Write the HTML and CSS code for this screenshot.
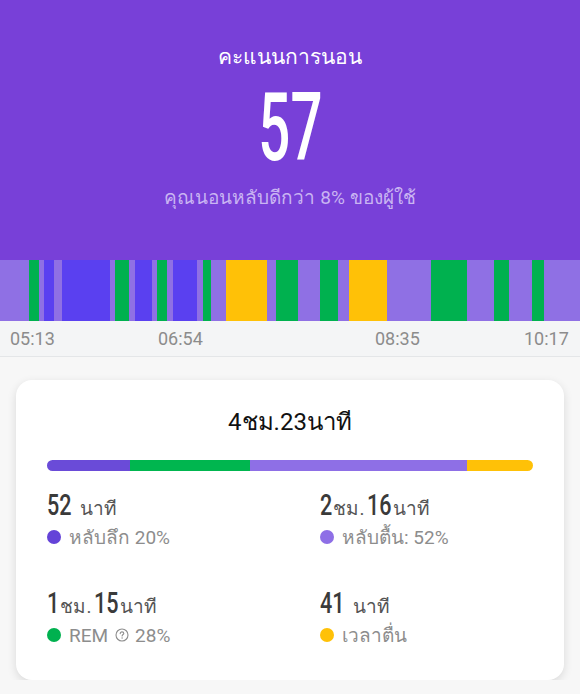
FILE: index.html
```html
<!DOCTYPE html>
<html lang="th">
<head>
    <meta charset="UTF-8">
    <meta name="viewport" content="width=device-width, initial-scale=1.0">
    <title>คะแนนการนอน</title>
    <link rel="stylesheet" href="styles.css">
</head>
<body>
    <div class="score-header">
        <h1 class="score-title">คะแนนการนอน</h1>
        <div class="score-value"><span>57</span></div>
        <p class="score-note">คุณนอนหลับดีกว่า 8% ของผู้ใช้</p>
    </div>

    <div class="stage-strip">
        <div class="stage light" style="flex: 29"></div>
        <div class="stage rem" style="flex: 10"></div>
        <div class="stage light" style="flex: 5"></div>
        <div class="stage deep" style="flex: 10"></div>
        <div class="stage light" style="flex: 8"></div>
        <div class="stage deep" style="flex: 48"></div>
        <div class="stage light" style="flex: 5"></div>
        <div class="stage rem" style="flex: 14"></div>
        <div class="stage light" style="flex: 6"></div>
        <div class="stage deep" style="flex: 17"></div>
        <div class="stage light" style="flex: 5"></div>
        <div class="stage rem" style="flex: 10"></div>
        <div class="stage light" style="flex: 6"></div>
        <div class="stage deep" style="flex: 24"></div>
        <div class="stage light" style="flex: 6"></div>
        <div class="stage rem" style="flex: 8"></div>
        <div class="stage light" style="flex: 15"></div>
        <div class="stage awake" style="flex: 41"></div>
        <div class="stage light" style="flex: 9"></div>
        <div class="stage rem" style="flex: 22"></div>
        <div class="stage light" style="flex: 22"></div>
        <div class="stage rem" style="flex: 18"></div>
        <div class="stage light" style="flex: 11"></div>
        <div class="stage awake" style="flex: 38"></div>
        <div class="stage light" style="flex: 44"></div>
        <div class="stage rem" style="flex: 36"></div>
        <div class="stage light" style="flex: 27"></div>
        <div class="stage rem" style="flex: 15"></div>
        <div class="stage light" style="flex: 23"></div>
        <div class="stage rem" style="flex: 12"></div>
        <div class="stage light" style="flex: 36"></div>
    </div>

    <div class="time-axis">
        <span class="time-label" style="left: 10px">05:13</span>
        <span class="time-label" style="left: 158px">06:54</span>
        <span class="time-label" style="left: 375px">08:35</span>
        <span class="time-label" style="left: 524px">10:17</span>
    </div>

    <div class="summary-card">
        <h2 class="summary-total">4ชม.23นาที</h2>

        <div class="ratio-bar">
            <div class="ratio deep" style="width: 83px"></div>
            <div class="ratio rem" style="width: 120px"></div>
            <div class="ratio light" style="width: 217px"></div>
            <div class="ratio awake" style="flex: 1"></div>
        </div>

        <div class="stats-grid">
            <div class="stat">
                <div class="stat-value"><span class="num d2">52</span> <span class="unit">นาที</span></div>
                <div class="stat-label"><span class="dot deep"></span>หลับลึก 20%</div>
            </div>
            <div class="stat">
                <div class="stat-value"><span class="num d1">2</span><span class="unit">ชม.</span><span class="num d2">16</span><span class="unit">นาที</span></div>
                <div class="stat-label"><span class="dot light"></span>หลับตื้น: 52%</div>
            </div>
            <div class="stat">
                <div class="stat-value"><span class="num d1">1</span><span class="unit">ชม.</span><span class="num d2">15</span><span class="unit">นาที</span></div>
                <div class="stat-label">
                    <span class="dot rem"></span>REM
                    <svg class="help-icon" viewBox="0 0 14 14" width="14" height="14">
                        <circle cx="7" cy="7" r="6" fill="none" stroke="#8d8d8d" stroke-width="1.1"/>
                        <path d="M5.2 5.6 C5.2 4.5 6 3.9 7 3.9 C8 3.9 8.8 4.5 8.8 5.4 C8.8 6.5 7.1 6.6 7.1 8" fill="none" stroke="#8d8d8d" stroke-width="1.1" stroke-linecap="round"/>
                        <circle cx="7.1" cy="10" r="0.7" fill="#8d8d8d"/>
                    </svg>
                    28%
                </div>
            </div>
            <div class="stat">
                <div class="stat-value"><span class="num d2">41</span> <span class="unit">นาที</span></div>
                <div class="stat-label"><span class="dot awake"></span>เวลาตื่น</div>
            </div>
        </div>
    </div>
</body>
</html>
```

FILE: styles.css
```css
* {
    box-sizing: border-box;
    margin: 0;
    padding: 0;
    font-family: Roboto, 'Noto Sans', sans-serif;
}

body {
    background-color: #f7f7f7;
    color: #333;
    width: 580px;
}

.score-header {
    height: 260px;
    background-color: #7840d8;
    color: white;
    text-align: center;
    padding-top: 43px;
}

.score-title {
    font-size: 21px;
    font-weight: 400;
    line-height: 28px;
}

.score-value {
    margin-top: 10px;
    height: 94px;
    font-size: 94px;
    font-weight: 500;
    line-height: 94px;
}

.score-value span {
    display: inline-block;
    transform: scaleX(0.6);
}

.score-note {
    margin-top: 11px;
    font-size: 19px;
    line-height: 24px;
    color: #c9b4f2;
}

.stage-strip {
    display: flex;
    height: 61px;
}

.stage.light { background-color: #8f70e4; }
.stage.deep { background-color: #5a40f0; }
.stage.rem { background-color: #00b14f; }
.stage.awake { background-color: #ffc107; }

.time-axis {
    position: relative;
    height: 36px;
    background-color: #f4f5f6;
    border-bottom: 1px solid #e4e6e8;
}

.time-label {
    position: absolute;
    top: 0;
    font-size: 18px;
    line-height: 35px;
    color: #8c8c8c;
}

.summary-card {
    margin: 23px 16px 0;
    padding: 27px 31px 33px;
    background-color: white;
    border-radius: 16px;
    box-shadow: 0 3px 10px rgba(0, 0, 0, 0.12);
}

.summary-total {
    font-size: 24px;
    font-weight: 400;
    line-height: 30px;
    text-align: center;
    color: #111;
}

.ratio-bar {
    display: flex;
    height: 11px;
    margin-top: 23px;
    border-radius: 6px;
    overflow: hidden;
}

.ratio.deep { background-color: #6a4bd8; }
.ratio.rem { background-color: #00b64f; }
.ratio.light { background-color: #8e6fe6; }
.ratio.awake { background-color: #ffc107; }

.stats-grid {
    display: grid;
    grid-template-columns: 273px auto;
    row-gap: 37px;
    margin-top: 17px;
}

.stat-value {
    height: 34px;
    font-size: 30px;
    font-weight: 500;
    line-height: 34px;
    color: #3a3a3a;
    white-space: nowrap;
}

.num {
    display: inline-block;
    transform: scaleX(0.72);
    transform-origin: left bottom;
}

.num.d1 { margin-right: -0.12em; }
.num.d2 { margin-right: -0.28em; }

.unit {
    font-size: 19px;
    font-weight: 400;
    color: #555;
    margin-right: 3px;
}

.stat-label {
    display: flex;
    align-items: center;
    margin-top: 3px;
    height: 24px;
    font-size: 19px;
    color: #8d8d8d;
    white-space: nowrap;
}

.dot {
    width: 14px;
    height: 14px;
    border-radius: 50%;
    margin-right: 8px;
}

.dot.deep { background-color: #6443d8; }
.dot.light { background-color: #8e6fe6; }
.dot.rem { background-color: #00b14f; }
.dot.awake { background-color: #ffc107; }

.help-icon {
    margin: 0 6px 0 7px;
}
```
